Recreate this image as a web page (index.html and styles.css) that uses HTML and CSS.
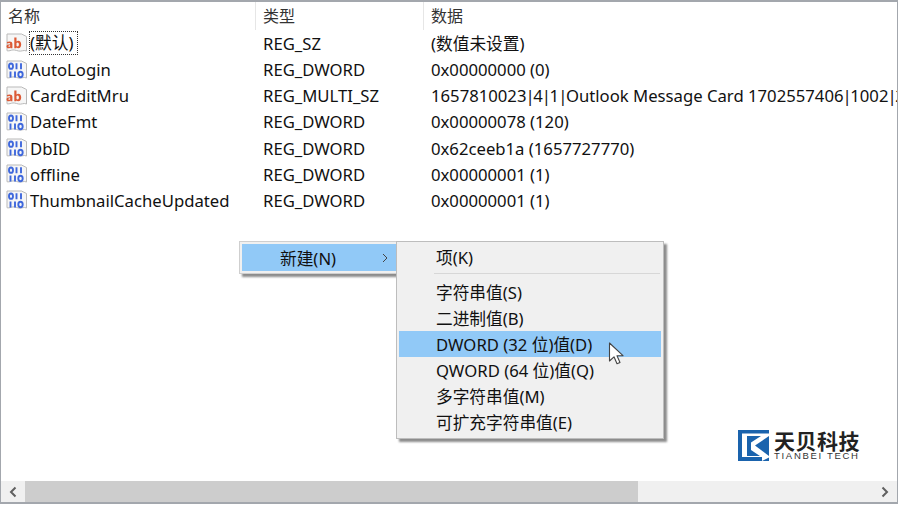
FILE: index.html
```html
<!DOCTYPE html>
<html lang="zh-CN">
<head>
<meta charset="utf-8">
<title>注册表</title>
<link rel="stylesheet" href="styles.css">
</head>
<body>
<svg class="defs" width="0" height="0" aria-hidden="true">
  <symbol id="page" viewBox="0 0 22 22">
    <path d="M1 2h14.500l5 2.500V19c-3-1.500-5 .8-8 0s-5-1.500-7-.8-3.500.8-4.500.5z" fill="#f6f6f6" stroke="#b9b9b9"/>
  </symbol>
  <symbol id="ico-ab" viewBox="0 0 22 22">
    <use href="#page"/>
    <path fill="#dc5a36" d="M2.400 16.300c-1.100 0-1.900-.8-1.900-1.900 0-1.500 1.200-2.100 3.700-2.200v-.3c0-.6-.4-.9-1.100-.9-.6 0-1.200.2-1.800.5l-.5-1.400c.8-.4 1.700-.6 2.700-.6 1.900 0 2.900.8 2.900 2.500v4.200H4.500l-.2-.8c-.5.6-1.100.9-1.900.9zm.7-1.500c.4 0 .8-.2 1.100-.6v-.9c-1.300.1-1.800.4-1.800.9 0 .4.300.6.700.6z"/>
    <path fill="#dc5a36" d="M8.300 5.500h2.200v4c.5-.5 1.100-.7 1.800-.7 1.800 0 2.900 1.400 2.900 3.700 0 2.400-1.200 3.800-3 3.800-.7 0-1.300-.3-1.800-.8l-.2.700H8.300zm3.300 5c-.4 0-.8.200-1.100.5v3.100c.3.300.7.500 1.100.5.800 0 1.300-.7 1.300-2 0-1.400-.5-2.100-1.300-2.100z"/>
  </symbol>
  <symbol id="ico-bin" viewBox="0 0 22 22">
    <use href="#page"/>
    <g fill="none" stroke="#3f68dc" stroke-width="1.900">
      <ellipse cx="5" cy="7.200" rx="2" ry="2.700"/>
      <path d="M10.500 4.200v6M15 4.200v6"/>
      <path d="M4.500 12.500v6M9 12.500v6"/>
      <ellipse cx="14.500" cy="15.500" rx="2.200" ry="2.700"/>
    </g>
  </symbol>
</svg>
<main class="window">
  <div class="list">
    <div class="head">
      <div class="col col-name">名称</div>
      <div class="col col-type">类型</div>
      <div class="col col-data">数据</div>
    </div>
    <div class="row"><div class="cell-name"><svg class="icon"><use href="#ico-ab"/></svg><span class="focus">(默认)</span></div><div class="cell-type">REG_SZ</div><div class="cell-data">(数值未设置)</div></div>
    <div class="row"><div class="cell-name"><svg class="icon"><use href="#ico-bin"/></svg><span class="label">AutoLogin</span></div><div class="cell-type">REG_DWORD</div><div class="cell-data">0x00000000 (0)</div></div>
    <div class="row"><div class="cell-name"><svg class="icon"><use href="#ico-ab"/></svg><span class="label">CardEditMru</span></div><div class="cell-type">REG_MULTI_SZ</div><div class="cell-data">1657810023<span class="pipe">|</span>4<span class="pipe">|</span>1<span class="pipe">|</span>Outlook Message Card 1702557406<span class="pipe">|</span>1002<span class="pipe">|</span>2</div></div>
    <div class="row"><div class="cell-name"><svg class="icon"><use href="#ico-bin"/></svg><span class="label">DateFmt</span></div><div class="cell-type">REG_DWORD</div><div class="cell-data">0x00000078 (120)</div></div>
    <div class="row"><div class="cell-name"><svg class="icon"><use href="#ico-bin"/></svg><span class="label">DbID</span></div><div class="cell-type">REG_DWORD</div><div class="cell-data">0x62ceeb1a (1657727770)</div></div>
    <div class="row"><div class="cell-name"><svg class="icon"><use href="#ico-bin"/></svg><span class="label">offline</span></div><div class="cell-type">REG_DWORD</div><div class="cell-data">0x00000001 (1)</div></div>
    <div class="row"><div class="cell-name"><svg class="icon"><use href="#ico-bin"/></svg><span class="label">ThumbnailCacheUpdated</span></div><div class="cell-type">REG_DWORD</div><div class="cell-data">0x00000001 (1)</div></div>
  </div>
  <div class="scrollbar">
    <div class="arrow"><svg viewBox="0 0 10 12" class="chev"><path d="M7.500 1.500 3 6l4.500 4.500"/></svg></div>
    <div class="track"><div class="thumb"></div></div>
    <div class="arrow"><svg viewBox="0 0 10 12" class="chev"><path d="M2.500 1.500 7 6l-4.500 4.500"/></svg></div>
  </div>

  <div class="menu menu-parent">
    <div class="parent-item"><span>新建(N)</span><svg viewBox="0 0 8 10" class="sub"><path d="M2 1l4 4-4 4"/></svg></div>
  </div>
  <div class="menu menu-sub">
    <div class="item">项(K)</div>
    <div class="sep"></div>
    <div class="item">字符串值(S)</div>
    <div class="item">二进制值(B)</div>
    <div class="item active">DWORD (32 位)值(D)</div>
    <div class="item">QWORD (64 位)值(Q)</div>
    <div class="item">多字符串值(M)</div>
    <div class="item">可扩充字符串值(E)</div>
  </div>
  <svg class="cursor" viewBox="0 0 16 24"><path d="M1.500 1v18l4.500-4.200 3 7 3-1.300-3-6.800h6z" fill="#fff" stroke="#444" stroke-width="1.100" stroke-linejoin="round"/></svg>

  <div class="brand">
    <svg class="brand-mark" viewBox="0 0 31 31">
      <path fill="#1a63ad" d="M0 0h31v3.500H0zM0 3.500h4V31H0zM4 27h20v4H4zM9 6h4v20H9z"/>
      <path fill="#1a63ad" d="M31 6 17 15.500 31 26z"/>
      <path fill="#1a63ad" d="M13 6h10l-10 6.500zM13 20l9 6H13z"/>
      <path fill="#1a63ad" d="M24 31h7v-3.500z"/>
    </svg>
    <div class="brand-text">
      <div class="brand-cn">天贝科技</div>
      <div class="brand-en">TIANBEI TECH</div>
    </div>
  </div>
</main>
</body>
</html>
```
FILE: styles.css
```css
* { box-sizing: border-box; }
html, body { margin: 0; padding: 0; background: #fff; }
body {
  width: 900px;
  height: 505px;
  overflow: hidden;
  font-family: "Noto Sans", "Noto Sans CJK SC", sans-serif;
  font-size: 16.7px;
  color: #111;
}
.defs { position: absolute; }
.window {
  position: relative;
  width: 898px;
  height: 504px;
  border: 1px solid #a3a7ad;
  border-top-width: 2px;
  border-bottom-width: 2px;
  display: flex;
  flex-direction: column;
  background: #fff;
}
.list { flex: 1; }
.head { display: flex; height: 28.400px; }
.col {
  padding: 1px 0 0 7px;
  font-size: 16px;
  color: #333;
  border-right: 1px solid #e6e6e6;
  height: 28px;
}
.col-name { width: 255px; }
.col-type { width: 168px; }
.col-data { flex: 1; border-right: 0; }
.row { display: flex; height: 26.150px; align-items: center; white-space: nowrap; }
.cell-name { width: 255px; display: flex; align-items: center; padding-left: 5px; gap: 2px; }
.cell-type { width: 168px; padding-left: 7px; }
.cell-data { flex: 1; padding-left: 7px; overflow: hidden; }
.pipe { letter-spacing: -2.400px; margin-left: -1px; margin-right: 1px; }
.icon { width: 22px; height: 22px; flex: none; }
.focus { border: 1px dotted #333; padding: 0 4px 0 0; line-height: 22px; margin-left: -1px; }
.scrollbar { display: flex; height: 21px; background: #f0f0f0; }
.arrow { width: 24px; display: flex; align-items: center; justify-content: center; flex: none; }
.chev { width: 10px; height: 12px; fill: none; stroke: #606060; stroke-width: 2; }
.track { flex: 1; }
.thumb { width: 613px; height: 100%; background: #cdcdcd; }
.menu { position: absolute; background: #f0f0f0; box-shadow: 3px 3px 2px rgba(0,0,0,.45); border: 1px solid #cfcfcf; }
.menu-parent { left: 238px; top: 239px; width: 160px; height: 33px; padding: 2px; }
.parent-item {
  height: 27px;
  background: #91c9f7;
  display: flex;
  align-items: center;
  padding-left: 38px;
  padding-right: 7px;
  justify-content: space-between;
}
.sub { width: 8px; height: 10px; fill: none; stroke: #444; stroke-width: 1; }
.menu-sub { left: 395px; top: 239px; width: 268px; height: 198px; padding: 2px; border-color: #bdbdbd; z-index: 2; }
.item { height: 26px; line-height: 27px; padding-left: 37px; white-space: nowrap; }
.sep { height: 1px; margin: 3px 1px 5px 35px; background: #d7d7d7; }
.item.active { background: #91c9f7; }
.cursor { position: absolute; left: 607px; top: 340px; width: 16px; height: 24px; z-index: 3; }
.brand { position: absolute; left: 737px; top: 428px; display: flex; gap: 5px; }
.brand-mark { width: 31px; height: 31px; flex: none; }
.brand-text { display: flex; flex-direction: column; }
.brand-cn { font-family: "Noto Sans CJK SC", sans-serif; font-weight: 700; font-size: 21px; line-height: 21px; letter-spacing: .5px; color: #222; }
.brand-en { font-family: "Liberation Sans", sans-serif; font-size: 9.500px; line-height: 10px; letter-spacing: 1.700px; color: #333; white-space: nowrap; }
```
